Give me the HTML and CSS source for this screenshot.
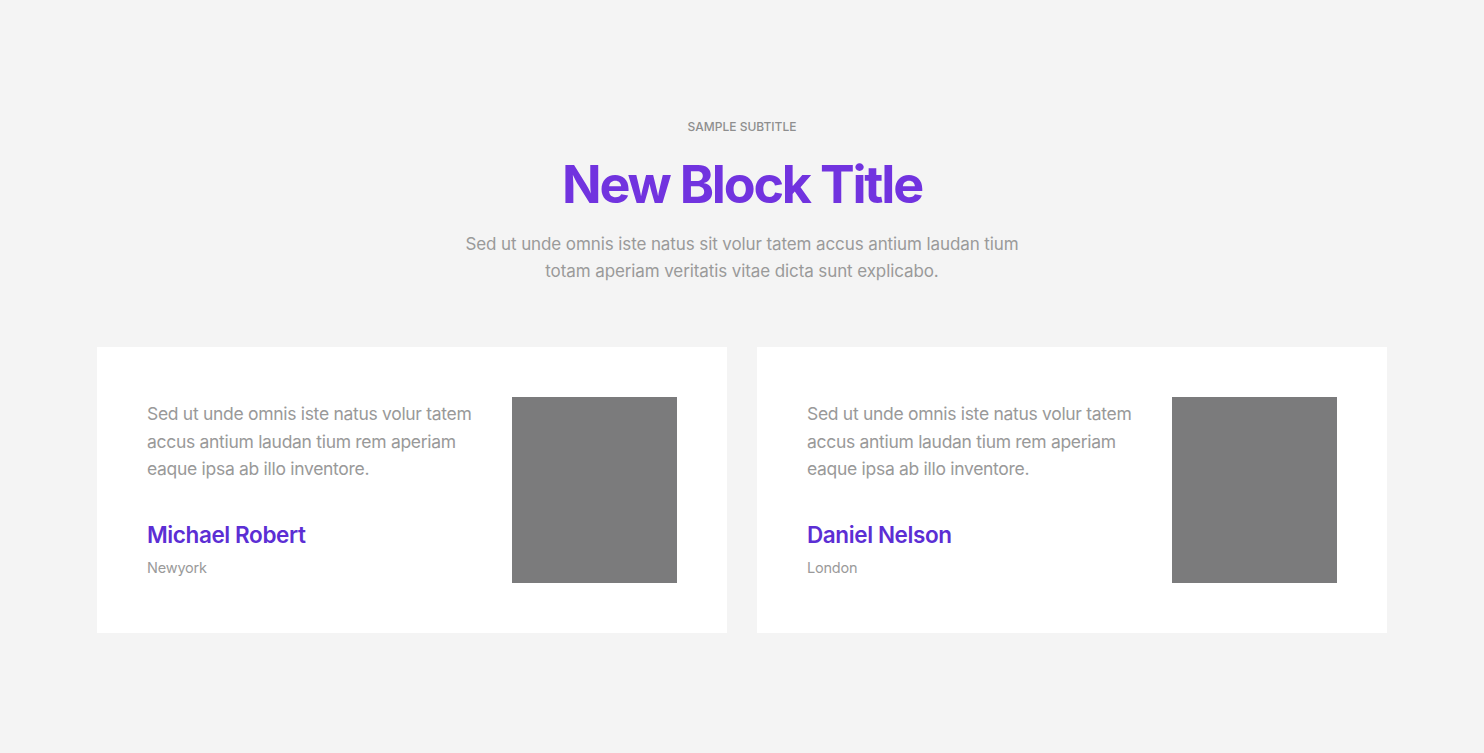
FILE: index.html
```html
<!DOCTYPE html>
<html lang="en">
<head>
<meta charset="utf-8">
<title>New Block Title</title>
<link rel="stylesheet" href="styles.css">
</head>
<body>
<section class="block">
  <header class="block-head">
    <p class="subtitle">SAMPLE SUBTITLE</p>
    <h1 class="title">New Block Title</h1>
    <p class="lead">Sed ut unde omnis iste natus sit volur tatem accus antium laudan tium totam aperiam veritatis vitae dicta sunt explicabo.</p>
  </header>
  <div class="cards">
    <article class="card">
      <div class="card-body">
        <p class="quote">Sed ut unde omnis iste natus volur tatem accus antium laudan tium rem aperiam eaque ipsa ab illo inventore.</p>
        <h3 class="name">Michael Robert</h3>
        <p class="place">Newyork</p>
      </div>
      <div class="photo"></div>
    </article>
    <article class="card">
      <div class="card-body">
        <p class="quote">Sed ut unde omnis iste natus volur tatem accus antium laudan tium rem aperiam eaque ipsa ab illo inventore.</p>
        <h3 class="name">Daniel Nelson</h3>
        <p class="place">London</p>
      </div>
      <div class="photo"></div>
    </article>
  </div>
</section>
</body>
</html>
```

FILE: styles.css
```css
html, body {
  margin: 0;
  padding: 0;
}
body {
  background: #f4f4f4;
  font-family: "Inter", "Noto Sans", "Liberation Sans", sans-serif;
  color: #999;
}
.block {
  padding: 119px 97px 120px;
}
.block-head {
  text-align: center;
  display: flex;
  flex-direction: column;
  align-items: center;
}
.subtitle {
  margin: 0;
  font-size: 12px;
  line-height: 16px;
  font-weight: 500;
  color: #8e8e8e;
}
.title {
  margin: 21px 0 0;
  font-size: 52px;
  line-height: 58px;
  font-weight: 700;
  letter-spacing: -2.2px;
  color: #7133df;
}
.lead {
  margin: 17px 0 0;
  width: 580px;
  font-size: 17px;
  line-height: 27px;
  color: #9a9a9a;
  letter-spacing: -0.1px;
}
.cards {
  margin-top: 62px;
  display: grid;
  grid-template-columns: 1fr 1fr;
  gap: 30px;
}
.card {
  background: #fff;
  padding: 50px;
  display: flex;
  justify-content: space-between;
  align-items: flex-start;
}
.card-body {
  width: 340px;
}
.quote {
  margin: 3px 0 0;
  font-size: 17.5px;
  line-height: 27.5px;
  color: #999;
  letter-spacing: -0.3px;
}
.name {
  margin: 37px 0 0;
  font-size: 22.5px;
  line-height: 30px;
  font-weight: 600;
  letter-spacing: -0.4px;
  color: #5c2ed4;
}
.place {
  margin: 8px 0 0;
  font-size: 14.5px;
  line-height: 20px;
  color: #9a9a9a;
  letter-spacing: -0.2px;
}
.photo {
  width: 165px;
  height: 186px;
  background: #7b7b7c;
  flex-shrink: 0;
}
```
